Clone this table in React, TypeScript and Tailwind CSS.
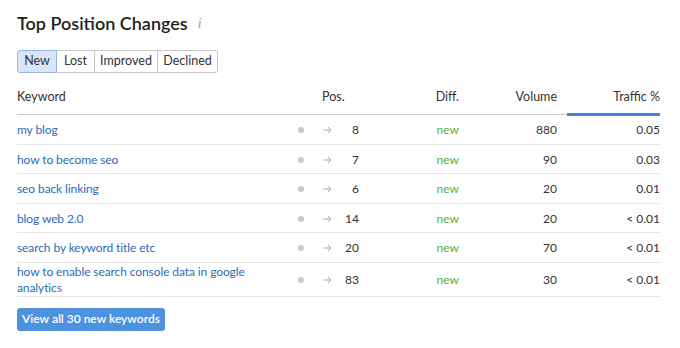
import React from "react";

const rows: { kw: string; pos: string; vol: string; tr: string }[] = [
  { kw: "my blog", pos: "8", vol: "880", tr: "0.05" },
  { kw: "how to become seo", pos: "7", vol: "90", tr: "0.03" },
  { kw: "seo back linking", pos: "6", vol: "20", tr: "0.01" },
  { kw: "blog web 2.0", pos: "14", vol: "20", tr: "< 0.01" },
  { kw: "search by keyword title etc", pos: "20", vol: "70", tr: "< 0.01" },
  { kw: "how to enable search console data in google analytics", pos: "83", vol: "30", tr: "< 0.01" },
];

function Arrow() {
  return (
    <svg width="9" height="8" viewBox="0 0 9 8" fill="none" stroke="#a8a8a8" strokeWidth="1">
      <path d="M0.5 4H8M5 1l3 3-3 3" />
    </svg>
  );
}

export default function App() {
  return (
    <div
      className="w-[680px] h-[348px] bg-white text-[#333] overflow-hidden"
      style={{ fontFamily: 'Lato, "Noto Sans", sans-serif' }}
    >
      <div className="px-[17px] pt-[9px]">
        <div className="flex items-center h-[28px]">
          <span className="text-[18px] font-semibold text-[#222]">Top Position Changes</span>
          <span
            className="ml-[10px] text-[14px] italic text-[#999]"
            style={{ fontFamily: '"Liberation Serif", serif' }}
          >
            i
          </span>
        </div>
        <div className="mt-[13px] flex h-[23px] text-[12.5px] w-fit">
          <button className="w-[40px] bg-[#d6e6f8] border border-[#94b8e2] rounded-l-[3px] text-[#333]">New</button>
          <button className="w-[38px] border-y border-r border-[#c8c8c8] text-[#333]">Lost</button>
          <button className="w-[63px] border-y border-r border-[#c8c8c8] text-[#333]">Improved</button>
          <button className="w-[60px] border-y border-r border-[#c8c8c8] rounded-r-[3px] text-[#333]">Declined</button>
        </div>

        <div className="mt-[8px] w-[643px] text-[12.5px]">
          <div className="flex h-[34px] items-center border-b border-[#c8c8c8] relative">
            <div className="w-[270px]">Keyword</div>
            <div className="w-[72px] pl-[35px]">Pos.</div>
            <div className="w-[100px] text-right">Diff.</div>
            <div className="w-[98px] text-right">Volume</div>
            <div className="ml-[10px] w-[93px] text-right self-stretch flex items-center justify-end border-b-[3px] border-[#3d87d8] -mb-[2px]">
              Traffic %
            </div>
          </div>
          {rows.map((r, i) => {
            const two = i === rows.length - 1;
            return (
              <div
                key={i}
                className={`flex items-center border-b border-[#e6e6e6] ${two ? "h-[34px]" : "h-[29.5px]"} pt-[2px] text-[12px]`}
              >
                <div className="w-[270px] pr-[32px] text-[#2d6bb8] leading-[16px] tracking-[-0.1px]">{r.kw}</div>
                <div className="w-[28px] flex justify-center">
                  <span className="w-[6px] h-[6px] rounded-full bg-[#c8c8c8]" />
                </div>
                <div className="w-[24px] flex justify-center">
                  <Arrow />
                </div>
                <div className="w-[20px] text-right">{r.pos}</div>
                <div className="w-[100px] text-right text-[#58b03a]">new</div>
                <div className="w-[98px] text-right">{r.vol}</div>
                <div className="w-[103px] text-right">{r.tr}</div>
              </div>
            );
          })}
        </div>

        <button className="mt-[11px] h-[23px] w-[148px] rounded-[3px] bg-[#4d92de] text-white text-[12px] font-semibold whitespace-nowrap">
          View all 30 new keywords
        </button>
      </div>
    </div>
  );
}
